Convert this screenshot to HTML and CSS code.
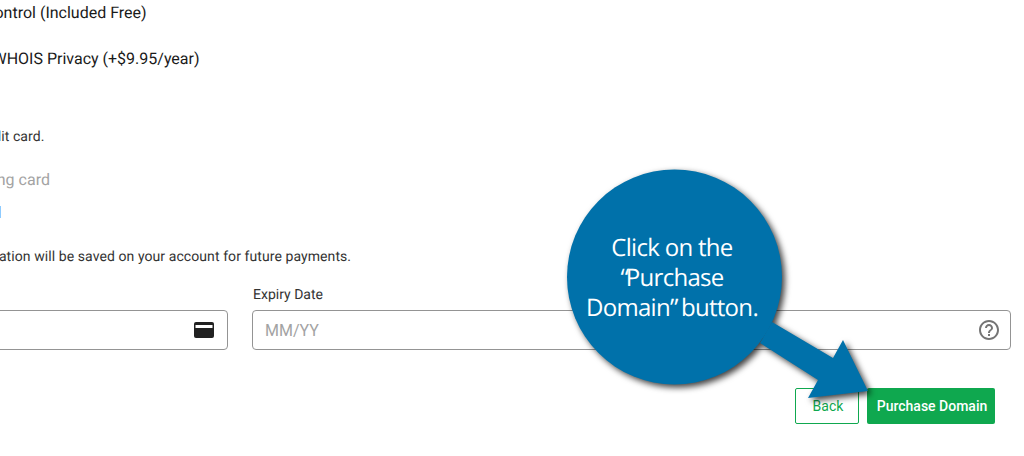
FILE: index.html
```html
<!DOCTYPE html>
<html lang="en">
<head>
    <meta charset="UTF-8">
    <meta name="viewport" content="width=device-width, initial-scale=1.0">
    <title>Purchase Domain</title>
    <link rel="stylesheet" href="styles.css">
</head>
<body>

<div class="page">
    <div class="form">
        <div class="option option-control">Domain Control (Included Free)</div>
        <div class="option option-whois">Add WHOIS Privacy (+$9.95/year)</div>
        <p class="note note-card">Pay with your credit card.</p>
        <div class="existing">Use existing card</div>
        <div class="toggle"></div>
        <p class="note note-saved">Your payment information will be saved on your account for future payments.</p>

        <div class="fields">
            <div class="field">
                <label for="cardNumber">Card Number</label>
                <div class="input-wrap">
                    <input type="text" id="cardNumber">
                    <svg class="field-icon icon-card" viewBox="0 0 20 16" width="20" height="16">
                        <rect width="20" height="16" rx="2" fill="#212121"/>
                        <rect x="1.5" y="3" width="17" height="3" fill="#fff"/>
                    </svg>
                </div>
            </div>
            <div class="field">
                <label for="expiryDate">Expiry Date</label>
                <div class="input-wrap">
                    <input type="text" id="expiryDate" placeholder="MM/YY">
                    <svg class="field-icon" viewBox="0 0 24 24" width="24" height="24">
                        <path fill="#757575" d="M11 18h2v-2h-2v2zm1-16C6.48 2 2 6.48 2 12s4.48 10 10 10 10-4.48 10-10S17.52 2 12 2zm0 18c-4.41 0-8-3.59-8-8s3.59-8 8-8 8 3.59 8 8-3.59 8-8 8zm0-14c-2.21 0-4 1.79-4 4h2c0-1.1.9-2 2-2s2 .9 2 2c0 2-3 1.75-3 5h2c0-2.25 3-2.5 3-5 0-2.21-1.79-4-4-4z"/>
                    </svg>
                </div>
            </div>
        </div>

        <div class="actions">
            <button class="btn-back">Back</button>
            <button class="btn-purchase">Purchase Domain</button>
        </div>
    </div>

    <svg class="callout-shape" viewBox="0 0 1024 456" width="1024" height="456">
        <circle cx="674.5" cy="277" r="107.5" fill="#0071aa"/>
        <polygon fill="#0071aa" points="760,343 772,322 833,358 843,340 868,391 808,398 818,380"/>
    </svg>
    <div class="callout-text">Click on the<br><span class="quote">“</span>Purchase<br>Domain<span class="quote">”</span> button.</div>
</div>

</body>
</html>
```

FILE: styles.css
```css
body {
    margin: 0;
    background-color: #fff;
    font-family: Roboto, sans-serif;
    color: #212121;
    text-rendering: geometricPrecision;
}

.page {
    position: relative;
    width: 1024px;
    height: 456px;
    overflow: hidden;
}

.form {
    width: 1195px;
    margin-left: -200px;
}

.option {
    font-size: 16px;
    line-height: 24px;
    color: #1a1a1a;
}

.option-control {
    padding-top: 1px;
    padding-left: 125px;
}

.option-whois {
    margin-top: 22px;
    padding-left: 160px;
}

.note {
    margin: 0;
    font-size: 14px;
    line-height: 20px;
    letter-spacing: 0.08px;
    color: #333;
}

.note-card {
    margin-top: 56px;
    padding-left: 86px;
}

.existing {
    margin-top: 21px;
    padding-left: 128px;
    font-size: 16px;
    line-height: 24px;
    color: #a3a3a3;
}

.toggle {
    width: 1px;
    height: 12px;
    margin-top: 14px;
    margin-left: 200px;
    background-color: #8ecbff;
}

.note-saved {
    margin-top: 29px;
    padding-left: 67px;
}

.fields {
    display: grid;
    grid-template-columns: 428px 759px;
    gap: 24px;
    margin-top: 17px;
}

.field label {
    display: block;
    height: 20px;
    margin-bottom: 6px;
    padding-top: 1px;
    padding-left: 1px;
    box-sizing: border-box;
    font-size: 14px;
    line-height: 20px;
    color: #333;
}

.input-wrap {
    position: relative;
}

.input-wrap input {
    display: block;
    width: 100%;
    height: 40px;
    padding: 0 12px;
    box-sizing: border-box;
    border: 1px solid #949494;
    border-radius: 4px;
    font-family: Roboto, sans-serif;
    font-size: 16px;
}

.input-wrap input::placeholder {
    color: #a3a3a3;
}

.field-icon {
    position: absolute;
    top: 50%;
    right: 10px;
    transform: translateY(-50%);
}

.icon-card {
    right: 14px;
}

.actions {
    display: flex;
    justify-content: flex-end;
    gap: 8px;
    margin-top: 38px;
}

.actions button {
    height: 36px;
    padding: 0 0 0 2px;
    border-radius: 2px;
    font-family: Roboto, sans-serif;
    font-size: 14px;
}

.btn-back {
    width: 64px;
    border: 1px solid #0fa84f;
    background-color: #fff;
    color: #0fa84f;
    font-weight: 400;
}

.btn-purchase {
    width: 128px;
    border: none;
    background-color: #0fa84f;
    color: #fff;
    font-weight: 500;
}

.callout-shape {
    position: absolute;
    top: 0;
    left: 0;
    filter: drop-shadow(3px 3px 3px rgba(0, 0, 0, 0.75));
}

.callout-text {
    position: absolute;
    top: 233px;
    left: 567px;
    width: 210px;
    font-family: "Open Sans", sans-serif;
    font-size: 24px;
    line-height: 30px;
    letter-spacing: -0.7px;
    text-align: center;
    color: #fff;
}

.quote {
    letter-spacing: -3px;
}
```
